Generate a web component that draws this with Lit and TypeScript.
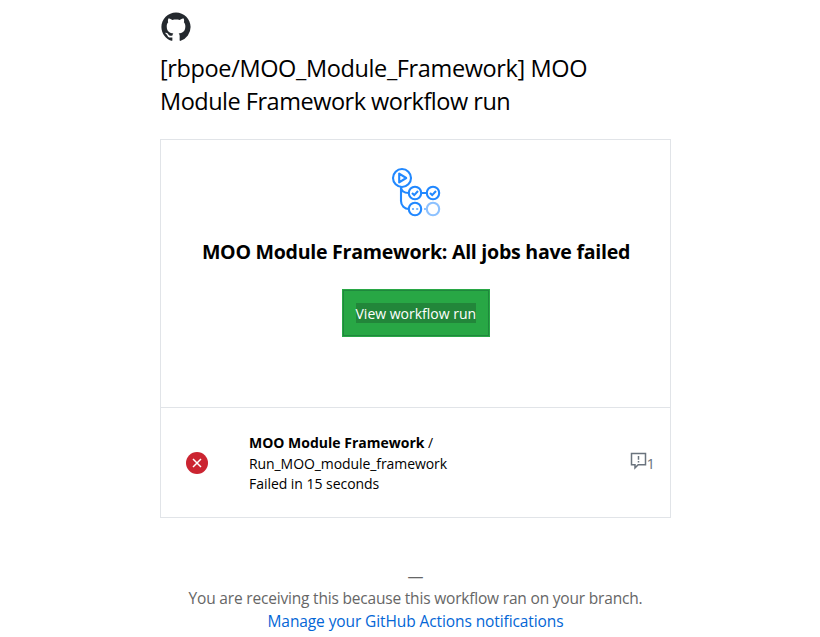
import { LitElement, html, css } from "lit";
import { customElement } from "lit/decorators.js";

@customElement("app-root")
class AppRoot extends LitElement {
  static styles = css`
    :host {
      display: block;
      width: 820px;
      height: 637px;
      overflow: hidden;
      background: #fff;
      color: #000;
      font-family: "Segoe UI", "Open Sans", "Noto Sans", sans-serif;
      font-size: 14px;
      white-space: nowrap;
    }
    svg { display: block; }
    .mail {
      width: 511px;
      margin-left: 160px;
      padding-top: 11px;
    }
    .title {
      margin: 9px 0 21px;
      font-size: 23.5px;
      font-weight: 400;
      line-height: 33px;
    }
    .title span { display: block; }
    .repo { letter-spacing: -0.37px; }
    .workflow { letter-spacing: -0.49px; }
    .card {
      box-sizing: border-box;
      height: 379px;
      border: 1px solid #e1e4e8;
    }
    .summary {
      display: flex;
      flex-direction: column;
      align-items: center;
      box-sizing: border-box;
      height: 268px;
      padding-top: 27px;
      border-bottom: 1px solid #e1e4e8;
    }
    .heading {
      margin: 21px 0 0;
      padding-left: 1px;
      font-size: 19.6px;
      line-height: 28px;
      font-weight: 700;
      letter-spacing: -0.28px;
    }
    .button {
      box-sizing: border-box;
      display: flex;
      align-items: center;
      justify-content: center;
      width: 148px;
      height: 48px;
      margin-top: 23px;
      background: #28a745;
      border: 1px solid #28a745;
      box-shadow: inset 0 0 0 1px #1f883d;
      color: #fff;
      text-decoration: none;
    }
    .label {
      width: 120px;
      height: 20px;
      line-height: 21px;
      background: #22863a;
    }
    .job {
      display: flex;
      align-items: center;
      height: 110px;
      padding: 0 15px 0 25px;
    }
    .info {
      flex: 1;
      margin-left: 41px;
      padding-top: 2px;
      line-height: 20.5px;
    }
    .run { letter-spacing: -0.08px; }
    .time { letter-spacing: -0.04px; }
    .notes {
      display: flex;
      align-items: center;
      padding-bottom: 4px;
      color: #6a737d;
    }
    .count {
      margin-left: -1px;
      padding-top: 3px;
      font-size: 15px;
      line-height: 20px;
    }
    .footer {
      display: flex;
      flex-direction: column;
      align-items: center;
      margin-top: 47px;
      font-size: 15.5px;
      line-height: 23px;
      color: #666;
    }
    .dash { height: 22px; font-size: 16px; }
    .why { letter-spacing: -0.19px; }
    .manage { color: #0366d6; text-decoration: none; letter-spacing: -0.1px; }
  `;

  render() {
    return html`
      <main class="mail">
        <svg width="32" height="32" viewBox="0 0 32 32">
          <path transform="translate(1.4 1.4) scale(1.825)" fill="#24292e" fill-rule="evenodd" d="M8 0C3.58 0 0 3.58 0 8c0 3.54 2.29 6.53 5.47 7.59.4.07.55-.17.55-.38 0-.19-.01-.82-.01-1.49-2.01.37-2.53-.49-2.69-.94-.09-.23-.48-.94-.82-1.13-.28-.15-.68-.52-.01-.53.63-.01 1.08.58 1.23.82.72 1.21 1.87.87 2.33.66.07-.52.28-.87.51-1.07-1.78-.2-3.64-.89-3.64-3.95 0-.87.31-1.59.82-2.15-.08-.2-.36-1.02.08-2.12 0 0 .67-.21 2.2.82.64-.18 1.32-.27 2-.27s1.36.09 2 .27c1.53-1.04 2.2-.82 2.2-.82.44 1.1.16 1.92.08 2.12.51.56.82 1.27.82 2.15 0 3.07-1.87 3.75-3.65 3.95.29.25.54.73.54 1.48 0 1.07-.01 1.93-.01 2.2 0 .21.15.46.55.38A8.01 8.01 0 0 0 16 8c0-4.42-3.58-8-8-8z"/>
        </svg>
        <h1 class="title">
          <span class="repo">[rbpoe/MOO_Module_Framework] MOO</span>
          <span class="workflow">Module Framework workflow run</span>
        </h1>
        <section class="card">
          <div class="summary">
            <svg width="50" height="50" viewBox="0 0 50 50" fill="none" stroke="#2188ff" stroke-width="2.1">
              <circle cx="11" cy="11" r="9"/>
              <path d="M8.2 6.6v8.8l7-4.4z" stroke-linejoin="round"/>
              <path d="M10 20v14a8 8 0 0 0 8 8M10 20c0 4 3 6 8 6M30 26h6"/>
              <circle cx="24" cy="26" r="6.2"/>
              <circle cx="42" cy="26" r="6.2"/>
              <circle cx="24" cy="42" r="6.2"/>
              <path d="M21 26l2.2 2.1 3.8-4.1M39 26l2.2 2.1 3.8-4.1"/>
              <path d="M21 42h2M25.2 42h2" stroke="#79b8ff"/>
              <g stroke="#8cc1ff"><circle cx="42" cy="42" r="6.2"/><path d="M33 42h3"/></g>
            </svg>
            <h2 class="heading">MOO Module Framework: All jobs have failed</h2>
            <a class="button"><span class="label">View workflow run</span></a>
          </div>
          <div class="job">
            <svg width="22" height="22" viewBox="0 0 22 22">
              <circle cx="11" cy="11" r="11" fill="#cb2431"/>
              <path d="M7 7l8 8M15 7l-8 8" stroke="#fff" stroke-width="1.5"/>
            </svg>
            <div class="info">
              <div><b>MOO Module Framework</b> /</div>
              <div class="run">Run_MOO_module_framework</div>
              <div class="time">Failed in 15 seconds</div>
            </div>
            <div class="notes">
              <svg width="17" height="18" viewBox="0 0 17 18" fill="none" stroke="#6a737d" stroke-width="1.5">
                <path d="M1.5 1.5h14v11.2H8.2L5 15.9v-3.2H1.5z"/>
                <path d="M8.5 4v3.8M8.5 9v1.6"/>
              </svg>
              <span class="count">1</span>
            </div>
          </div>
        </section>
        <footer class="footer">
          <span class="dash">—</span>
          <span class="why">You are receiving this because this workflow ran on your branch.</span>
          <a class="manage">Manage your GitHub Actions notifications</a>
        </footer>
      </main>
    `;
  }
}
